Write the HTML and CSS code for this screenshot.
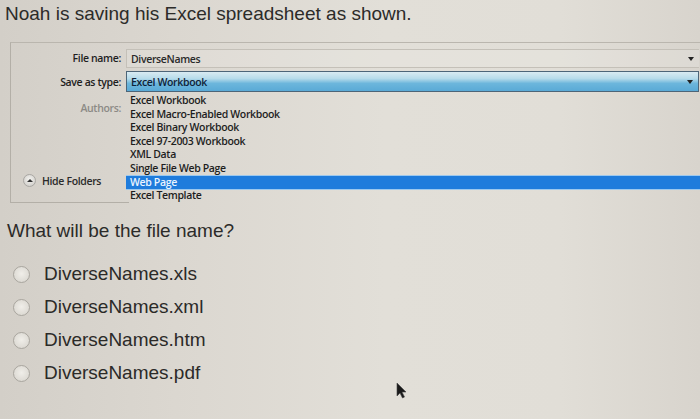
FILE: index.html
```html
<!DOCTYPE html>
<html>
<head>
<meta charset="utf-8">
<link rel="stylesheet" href="styles.css">
</head>
<body>
<div class="page">
  <p class="title">Noah is saving his Excel spreadsheet as shown.</p>

  <div class="dialog">
    <div class="label">File name:</div>
    <div class="field name-field">
      <span>DiverseNames</span>
      <span class="arrow"></span>
    </div>

    <div class="label">Save as type:</div>
    <div class="field type-field">
      <span>Excel Workbook</span>
      <span class="arrow"></span>
    </div>

    <div class="side">
      <div class="authors">Authors:</div>
      <div class="hide-folders">
        <span class="hide-icon"><span class="up"></span></span>
        <span>Hide Folders</span>
      </div>
    </div>
    <ul class="list">
      <li>Excel Workbook</li>
      <li>Excel Macro-Enabled Workbook</li>
      <li>Excel Binary Workbook</li>
      <li>Excel 97-2003 Workbook</li>
      <li>XML Data</li>
      <li>Single File Web Page</li>
      <li class="selected">Web Page</li>
      <li>Excel Template</li>
    </ul>
  </div>

  <p class="question">What will be the file name?</p>

  <ul class="options">
    <li><span class="radio"></span>DiverseNames.xls</li>
    <li><span class="radio"></span>DiverseNames.xml</li>
    <li><span class="radio"></span>DiverseNames.htm</li>
    <li><span class="radio"></span>DiverseNames.pdf</li>
  </ul>

  <svg class="cursor" width="11" height="17" viewBox="0 0 11 17">
    <path d="M1 1 L1 14 L4 11 L6.5 16 L8.5 15 L6 10 L10 10 Z" fill="#1a1a1a" stroke="#444" stroke-width="0.6"/>
  </svg>
</div>
</body>
</html>
```

FILE: styles.css
```css
html, body {
  margin: 0;
  padding: 0;
}

body {
  width: 700px;
  height: 419px;
  overflow: hidden;
  font-family: "Liberation Sans", Arial, sans-serif;
  color: #2c2b29;
  background: linear-gradient(90deg, #d3cfc8 0%, #dbd7d0 25%, #e2dfd8 55%, #e1ded7 80%, #d8d4cd 100%);
}

.page {
  position: relative;
  height: 419px;
}

.title {
  margin: 0;
  padding: 3px 0 0 5px;
  font-size: 19px;
  line-height: 22px;
}

.dialog {
  margin: 17px 0 0 10px;
  display: grid;
  grid-template-columns: 115px 1fr;
  grid-template-rows: 25px 24px 1fr;
  border-top: 1px solid #bab6ae;
  border-left: 1px solid #b3afa7;
  font-family: "Open Sans", "Noto Sans", sans-serif;
  font-size: 10.5px;
  font-weight: 600;
  letter-spacing: -0.35px;
  color: #1e1e1e;
}

.label {
  text-align: right;
  padding-right: 5px;
  align-self: end;
  line-height: 19px;
}

.field {
  display: flex;
  align-items: center;
  justify-content: space-between;
  padding: 0 5px 0 4px;
  margin-right: 1px;
  align-self: end;
}

.name-field {
  height: 17px;
  border: 1px solid #c4c0b8;
  border-right: none;
  background: rgba(255, 255, 255, 0.12);
  color: #2a2a2a;
}

.type-field {
  height: 19px;
  border: 1px solid #4d6578;
  background: linear-gradient(180deg, #d9ebf2 0%, #b6dbea 35%, #6cb6dc 60%, #5aaad6 100%);
  color: #0f2238;
}

.arrow {
  width: 0;
  height: 0;
  border-left: 3px solid transparent;
  border-right: 3px solid transparent;
  border-top: 4px solid #222;
}

.side {
  display: flex;
  flex-direction: column;
  border-bottom: 1px solid #b3afa7;
  margin-right: -3px;
  padding-bottom: 14px;
}

.authors {
  text-align: right;
  padding: 9px 8px 0 0;
  color: #8c8a86;
  line-height: 14px;
}

.hide-folders {
  margin-top: auto;
  display: flex;
  align-items: center;
  gap: 6px;
  padding-left: 12px;
  line-height: 14px;
  color: #2a2a2a;
}

.hide-icon {
  width: 11px;
  height: 11px;
  border-radius: 50%;
  border: 1px solid #a9a7a3;
  background: radial-gradient(circle at 50% 40%, #f4f3f0, #c9c7c2);
  display: flex;
  align-items: center;
  justify-content: center;
}

.up {
  width: 0;
  height: 0;
  border-left: 3px solid transparent;
  border-right: 3px solid transparent;
  border-bottom: 3px solid #333;
  margin-top: -1px;
}

.list {
  list-style: none;
  margin: 2px 0 0 0;
  padding: 0;
  position: relative;
  z-index: 1;
}

.list li {
  height: 13.6px;
  line-height: 13.6px;
  padding-left: 4px;
  white-space: nowrap;
}

.list li.selected {
  background: #1f7cdc;
  color: #eaf4ff;
  box-shadow: 0 -1px 0 #9cc8ee, 0 1px 0 #9cc8ee;
}

.question {
  margin: 17px 0 0 7px;
  font-size: 19px;
  line-height: 22px;
}

.options {
  list-style: none;
  margin: 16px 0 0 0;
  padding: 0;
  font-size: 19px;
}

.options li {
  height: 33px;
  display: flex;
  align-items: center;
  padding-left: 13px;
  color: #2b2a28;
}

.radio {
  width: 15px;
  height: 15px;
  border-radius: 50%;
  border: 1px solid #a9a69f;
  background: radial-gradient(circle at 50% 45%, #f0eee9, #d6d3cc);
  margin-right: 14px;
  flex: none;
}

.cursor {
  position: absolute;
  left: 396px;
  top: 382px;
}
```
